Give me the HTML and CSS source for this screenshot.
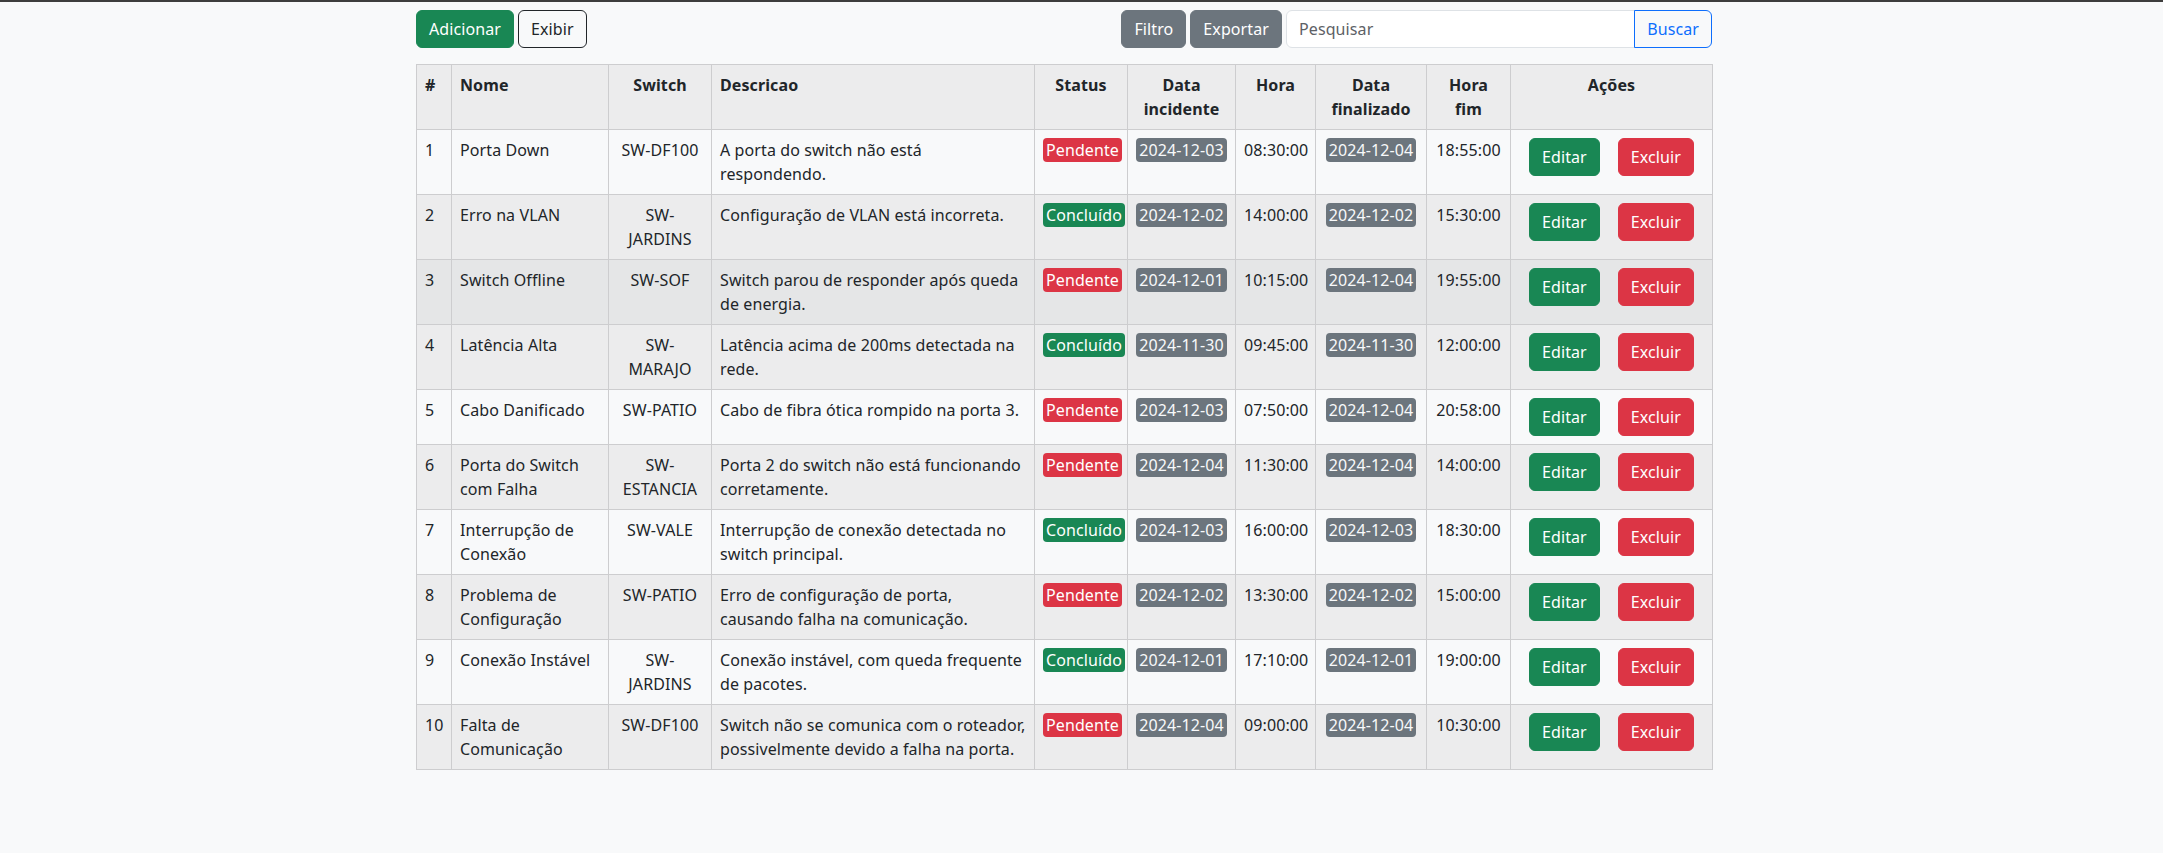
FILE: index.html
```html
<!DOCTYPE html>
<html lang="pt-BR">
<head>
<meta charset="utf-8">
<title>Incidentes</title>
<link rel="stylesheet" href="styles.css">
</head>
<body>
<div class="page">
  <div class="toolbar">
    <div class="group">
      <button class="btn btn-success">Adicionar</button>
      <button class="btn btn-outline-dark">Exibir</button>
    </div>
    <div class="group">
      <button class="btn btn-secondary">Filtro</button>
      <button class="btn btn-secondary">Exportar</button>
      <div class="input-group">
        <input class="search" type="text" placeholder="Pesquisar">
        <button class="btn btn-outline-primary">Buscar</button>
      </div>
    </div>
  </div>

  <table class="grid">
    <thead>
      <tr class="head">
        <th class="c-id">#</th>
        <th class="c-nome">Nome</th>
        <th class="c-switch center">Switch</th>
        <th class="c-desc">Descricao</th>
        <th class="c-status center">Status</th>
        <th class="c-data center">Data incidente</th>
        <th class="c-hora center">Hora</th>
        <th class="c-datafim center">Data finalizado</th>
        <th class="c-horafim center">Hora fim</th>
        <th class="c-acoes center">Ações</th>
      </tr>
    </thead>
    <tbody>
      <tr class="light">
        <td>1</td><td>Porta Down</td><td class="center">SW-DF100</td>
        <td>A porta do switch não está respondendo.</td>
        <td class="center"><span class="badge b-red">Pendente</span></td>
        <td class="center"><span class="badge b-gray">2024-12-03</span></td>
        <td class="center">08:30:00</td>
        <td class="center"><span class="badge b-gray">2024-12-04</span></td>
        <td class="center">18:55:00</td>
        <td class="center"><div class="actions"><button class="btn btn-success">Editar</button><button class="btn btn-danger">Excluir</button></div></td>
      </tr>
      <tr class="dark">
        <td>2</td><td>Erro na VLAN</td><td class="center">SW-JARDINS</td>
        <td>Configuração de VLAN está incorreta.</td>
        <td class="center"><span class="badge b-green">Concluído</span></td>
        <td class="center"><span class="badge b-gray">2024-12-02</span></td>
        <td class="center">14:00:00</td>
        <td class="center"><span class="badge b-gray">2024-12-02</span></td>
        <td class="center">15:30:00</td>
        <td class="center"><div class="actions"><button class="btn btn-success">Editar</button><button class="btn btn-danger">Excluir</button></div></td>
      </tr>
      <tr class="hover">
        <td>3</td><td>Switch Offline</td><td class="center">SW-SOF</td>
        <td>Switch parou de responder após queda de energia.</td>
        <td class="center"><span class="badge b-red">Pendente</span></td>
        <td class="center"><span class="badge b-gray">2024-12-01</span></td>
        <td class="center">10:15:00</td>
        <td class="center"><span class="badge b-gray">2024-12-04</span></td>
        <td class="center">19:55:00</td>
        <td class="center"><div class="actions"><button class="btn btn-success">Editar</button><button class="btn btn-danger">Excluir</button></div></td>
      </tr>
      <tr class="dark">
        <td>4</td><td>Latência Alta</td><td class="center">SW-MARAJO</td>
        <td>Latência acima de 200ms detectada na rede.</td>
        <td class="center"><span class="badge b-green">Concluído</span></td>
        <td class="center"><span class="badge b-gray">2024-11-30</span></td>
        <td class="center">09:45:00</td>
        <td class="center"><span class="badge b-gray">2024-11-30</span></td>
        <td class="center">12:00:00</td>
        <td class="center"><div class="actions"><button class="btn btn-success">Editar</button><button class="btn btn-danger">Excluir</button></div></td>
      </tr>
      <tr class="light">
        <td>5</td><td>Cabo Danificado</td><td class="center">SW-PATIO</td>
        <td>Cabo de fibra ótica rompido na porta 3.</td>
        <td class="center"><span class="badge b-red">Pendente</span></td>
        <td class="center"><span class="badge b-gray">2024-12-03</span></td>
        <td class="center">07:50:00</td>
        <td class="center"><span class="badge b-gray">2024-12-04</span></td>
        <td class="center">20:58:00</td>
        <td class="center"><div class="actions"><button class="btn btn-success">Editar</button><button class="btn btn-danger">Excluir</button></div></td>
      </tr>
      <tr class="dark">
        <td>6</td><td>Porta do Switch com Falha</td><td class="center">SW-ESTANCIA</td>
        <td>Porta 2 do switch não está funcionando corretamente.</td>
        <td class="center"><span class="badge b-red">Pendente</span></td>
        <td class="center"><span class="badge b-gray">2024-12-04</span></td>
        <td class="center">11:30:00</td>
        <td class="center"><span class="badge b-gray">2024-12-04</span></td>
        <td class="center">14:00:00</td>
        <td class="center"><div class="actions"><button class="btn btn-success">Editar</button><button class="btn btn-danger">Excluir</button></div></td>
      </tr>
      <tr class="light">
        <td>7</td><td>Interrupção de Conexão</td><td class="center">SW-VALE</td>
        <td>Interrupção de conexão detectada no switch principal.</td>
        <td class="center"><span class="badge b-green">Concluído</span></td>
        <td class="center"><span class="badge b-gray">2024-12-03</span></td>
        <td class="center">16:00:00</td>
        <td class="center"><span class="badge b-gray">2024-12-03</span></td>
        <td class="center">18:30:00</td>
        <td class="center"><div class="actions"><button class="btn btn-success">Editar</button><button class="btn btn-danger">Excluir</button></div></td>
      </tr>
      <tr class="dark">
        <td>8</td><td>Problema de Configuração</td><td class="center">SW-PATIO</td>
        <td>Erro de configuração de porta, causando falha na comunicação.</td>
        <td class="center"><span class="badge b-red">Pendente</span></td>
        <td class="center"><span class="badge b-gray">2024-12-02</span></td>
        <td class="center">13:30:00</td>
        <td class="center"><span class="badge b-gray">2024-12-02</span></td>
        <td class="center">15:00:00</td>
        <td class="center"><div class="actions"><button class="btn btn-success">Editar</button><button class="btn btn-danger">Excluir</button></div></td>
      </tr>
      <tr class="light">
        <td>9</td><td>Conexão Instável</td><td class="center">SW-JARDINS</td>
        <td>Conexão instável, com queda frequente de pacotes.</td>
        <td class="center"><span class="badge b-green">Concluído</span></td>
        <td class="center"><span class="badge b-gray">2024-12-01</span></td>
        <td class="center">17:10:00</td>
        <td class="center"><span class="badge b-gray">2024-12-01</span></td>
        <td class="center">19:00:00</td>
        <td class="center"><div class="actions"><button class="btn btn-success">Editar</button><button class="btn btn-danger">Excluir</button></div></td>
      </tr>
      <tr class="dark">
        <td>10</td><td>Falta de Comunicação</td><td class="center">SW-DF100</td>
        <td>Switch não se comunica com o roteador, possivelmente devido a falha na porta.</td>
        <td class="center"><span class="badge b-red">Pendente</span></td>
        <td class="center"><span class="badge b-gray">2024-12-04</span></td>
        <td class="center">09:00:00</td>
        <td class="center"><span class="badge b-gray">2024-12-04</span></td>
        <td class="center">10:30:00</td>
        <td class="center"><div class="actions"><button class="btn btn-success">Editar</button><button class="btn btn-danger">Excluir</button></div></td>
      </tr>
    </tbody>
  </table>
</div>
</body>
</html>
```

FILE: styles.css
```css
* { box-sizing: border-box; }

html, body {
  margin: 0;
  padding: 0;
}

body {
  background: #f8f9fa;
  color: #212529;
  font-family: "Noto Sans", "Open Sans", sans-serif;
  font-size: 16px;
  line-height: 24px;
  letter-spacing: 0.1px;
  border-top: 2px solid #3d3d3d;
  min-height: 853px;
}

.page {
  width: 1296px;
  margin-left: calc(50% - 665.5px);
  padding-top: 8px;
}

.toolbar {
  display: flex;
  justify-content: space-between;
  align-items: center;
  margin-bottom: 16px;
}

.group {
  display: flex;
  gap: 4px;
  align-items: center;
}

.btn {
  font-family: inherit;
  font-size: 16px;
  line-height: 24px;
  letter-spacing: inherit;
  padding: 6px 12px;
  border: 1px solid transparent;
  border-radius: 6px;
  cursor: pointer;
  background: transparent;
  color: #212529;
  white-space: nowrap;
}

.btn-success { background: #198754; border-color: #198754; color: #fff; }
.btn-danger { background: #dc3545; border-color: #dc3545; color: #fff; }
.btn-secondary { background: #6c757d; border-color: #6c757d; color: #fff; }
.btn-outline-dark { border-color: #212529; color: #212529; }
.btn-outline-primary { border-color: #0d6efd; color: #0d6efd; }

.input-group {
  display: flex;
  width: 426px;
}

.search {
  flex: 1;
  min-width: 0;
  font-family: inherit;
  font-size: 16px;
  line-height: 24px;
  letter-spacing: inherit;
  padding: 6px 12px;
  border: 1px solid #dee2e6;
  border-radius: 6px 0 0 6px;
  background: #fff;
  color: #212529;
  outline: none;
}

.search::placeholder { color: #5d6166; }

.input-group .btn {
  border-radius: 0 6px 6px 0;
  margin-left: -1px;
}

.grid {
  width: 1296px;
  border-collapse: collapse;
  table-layout: fixed;
}

.grid th,
.grid td {
  border: 1px solid #cdcdcf;
  padding: 8px;
  vertical-align: top;
  text-align: left;
}

.grid th { font-weight: 700; }

.grid .center { text-align: center; }

.head { background: #ececed; }
.light { background: #f8f9fa; }
.dark { background: #ececed; }
.hover { background: #e5e6e7; }

.c-id { width: 35px; }
.c-nome { width: 157px; }
.c-switch { width: 103px; }
.c-desc { width: 323px; }
.c-status { width: 93px; }
.c-data { width: 108px; }
.c-hora { width: 80px; }
.c-datafim { width: 111px; }
.c-horafim { width: 84px; }
.c-acoes { width: 202px; }

.badge {
  display: inline-block;
  padding: 0 3px;
  border-radius: 4px;
  color: #fff;
  white-space: nowrap;
}

.b-red { background: #dc3545; }
.b-green { background: #198754; }
.b-gray { background: #6c757d; color: #f8f9fa; }

.actions {
  display: flex;
  justify-content: center;
  gap: 18px;
}
```
